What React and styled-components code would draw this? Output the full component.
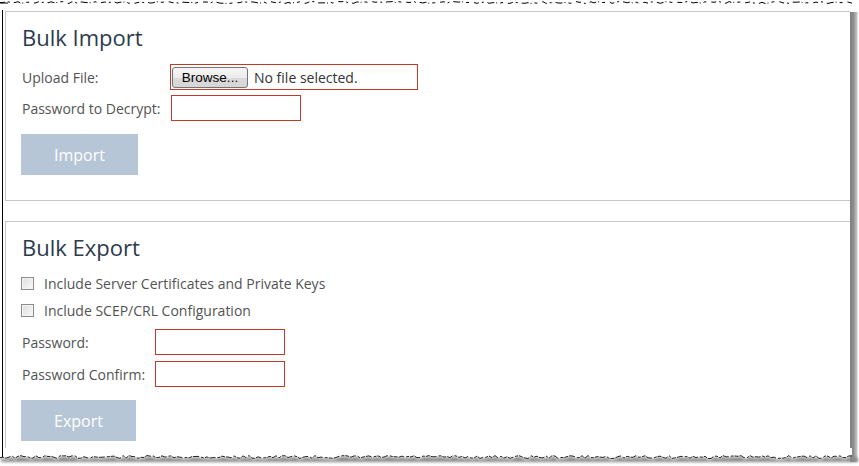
import React from 'react';
import styled, { createGlobalStyle } from 'styled-components';

const GlobalStyle = createGlobalStyle`
  html, body {
    margin: 0;
    background: #fff;
    font-family: "Open Sans", "Noto Sans", Arial, sans-serif;
  }
`;

const Page = styled.div`
  position: relative;
  width: 859px;
  height: 466px;
  overflow: hidden;
  background: #fff;
`;

const Frame = styled.div`
  display: flex;
  align-items: flex-start;
`;

const Sheet = styled.div`
  width: 848px;
  height: 446px;
  margin: 10px 0 0 2px;
  padding: 1px 0 0 2px;
  border-left: 1px solid #000;
  overflow: hidden;
  box-sizing: border-box;
`;

const RightShadow = styled.div`
  width: 8px;
  height: 450px;
  margin-top: 12px;
  background: linear-gradient(to right, #7d7d7d 0%, #8e8e8e 45%, #c4c4c4 85%, #f2f2f2 100%);
`;

const Panel = styled.section`
  width: 870px;
  margin-top: ${(p) => p.$top || 0}px;
  padding: 10px 0 ${(p) => p.$bottom || 0}px 15px;
  border: 1px solid #c6c6c6;
  box-sizing: border-box;
  display: flex;
  flex-direction: column;
`;

const Title = styled.h2`
  margin: 0;
  font-size: 22px;
  line-height: 30px;
  font-weight: 400;
  color: #2c3a4c;
  padding-left: 1px;
`;

const Form = styled.div`
  display: flex;
  flex-direction: column;
  margin-top: ${(p) => p.$top}px;
`;

const Row = styled.div`
  display: flex;
  align-items: center;
  height: ${(p) => p.$h || 26}px;
  margin-top: ${(p) => p.$gap || 0}px;
`;

const Label = styled.label`
  width: ${(p) => p.$w}px;
  flex: none;
  padding-left: 1px;
  box-sizing: border-box;
  font-size: 14px;
  color: #535353;
  white-space: nowrap;
`;

const TextBox = styled.input`
  width: 130px;
  height: 26px;
  margin: 0 0 0 ${(p) => p.$shift || 0}px;
  padding: 0 4px;
  border: 1px solid #c0392b;
  border-radius: 0;
  box-sizing: border-box;
  background: #fff;
  outline: none;
`;

const FileBox = styled.div`
  width: 248px;
  height: 26px;
  padding: 1px;
  border: 1px solid #c0392b;
  box-sizing: border-box;
  display: flex;
  align-items: center;
  gap: 6px;
`;

const BrowseButton = styled.button`
  width: 76px;
  height: 21px;
  padding: 0;
  border: 1px solid #747474;
  border-radius: 3px;
  background: linear-gradient(#f6f6f6 0%, #ececec 50%, #dadada 51%, #d6d6d6 100%);
  font-family: "Liberation Sans", Arial, sans-serif;
  font-size: 13.5px;
  color: #000;
`;

const FileName = styled.span`
  font-size: 14px;
  color: #333;
`;

const ActionButton = styled.button`
  align-self: flex-start;
  height: 41px;
  margin-top: 13px;
  padding: 0 33px;
  border: none;
  background: #b6c6d6;
  color: #fff;
  font-family: "Open Sans", sans-serif;
  font-size: 16px;
`;

const Check = styled.input.attrs({ type: 'checkbox' })`
  appearance: none;
  width: 13px;
  height: 13px;
  margin: 0 10px 0 0;
  border: 1px solid #8c8c8c;
  box-sizing: border-box;
  background: linear-gradient(135deg, #dcdcdc 0%, #eeeeee 60%, #f8f8f8 100%);
  box-shadow: inset 0 0 0 1px #f4f4f4;
`;

const CheckText = styled.span`
  font-size: 14px;
  color: #535353;
`;

const Edge = styled.svg`
  position: absolute;
  left: 0;
  ${(p) => (p.$bottom ? 'bottom: 0;' : 'top: 0;')}
`;

function jagged(width, base, amp, seed, step) {
  let s = seed;
  const rnd = () => {
    s = (s * 9301 + 49297) % 233280;
    return s / 233280;
  };
  const pts = [];
  for (let x = 0; x <= width; x += step) {
    pts.push([x, +(base + (rnd() - 0.5) * amp).toFixed(1)]);
  }
  return pts;
}

const str = (pts, dy = 0) => pts.map(([x, y]) => `${x},${y + dy}`).join(' ');

function TopEdge() {
  const pts = jagged(852, 2.5, 2, 7, 3);
  return (
    <Edge width="859" height="6">
      <polyline
        points={str(pts)}
        fill="none"
        stroke="#000"
        strokeWidth="1"
        strokeDasharray="5 3 2 4 7 2 1 3 3 5"
      />
      <line x1="0" y1="3" x2="8" y2="3" stroke="#000" />
    </Edge>
  );
}

function BottomEdge() {
  const pts = jagged(852, 9, 3, 13, 3);
  return (
    <Edge $bottom width="859" height="18">
      <defs>
        <filter id="blur" x="-5%" y="-100%" width="110%" height="300%">
          <feGaussianBlur stdDeviation="1.4" />
        </filter>
      </defs>
      <polygon points={`${str(pts, 1)} 858,10 858,14 2,14`} fill="#8a8a8a" filter="url(#blur)" />
      <polygon points={`0,0 ${str(pts)} 852,0`} fill="#fff" />
      <polyline points={str(pts)} fill="none" stroke="#222" strokeWidth="1" strokeDasharray="4 1 6 2 3 1" />
      <line x1="2.5" y1="0" x2="2.5" y2="9" stroke="#000" />
    </Edge>
  );
}

export default function App() {
  return (
    <Page>
      <GlobalStyle />
      <Frame>
        <Sheet>
          <Panel $bottom={25}>
            <Title>Bulk Import</Title>
            <Form $top={12}>
              <Row>
                <Label $w={149}>Upload File:</Label>
                <FileBox>
                  <BrowseButton>Browse...</BrowseButton>
                  <FileName>No file selected.</FileName>
                </FileBox>
              </Row>
              <Row $gap={5}>
                <Label $w={149}>Password to Decrypt:</Label>
                <TextBox type="password" $shift={1} />
              </Row>
            </Form>
            <ActionButton>Import</ActionButton>
          </Panel>

          <Panel $top={20} $bottom={40}>
            <Title>Bulk Export</Title>
            <Form $top={10}>
              <Row $h={22}>
                <Check />
                <CheckText>Include Server Certificates and Private Keys</CheckText>
              </Row>
              <Row $h={22} $gap={5}>
                <Check />
                <CheckText>Include SCEP/CRL Configuration</CheckText>
              </Row>
              <Row $gap={8}>
                <Label $w={134}>Password:</Label>
                <TextBox type="password" />
              </Row>
              <Row $gap={6}>
                <Label $w={134}>Password Confirm:</Label>
                <TextBox type="password" />
              </Row>
            </Form>
            <ActionButton>Export</ActionButton>
          </Panel>
        </Sheet>
        <RightShadow />
      </Frame>
      <TopEdge />
      <BottomEdge />
    </Page>
  );
}
